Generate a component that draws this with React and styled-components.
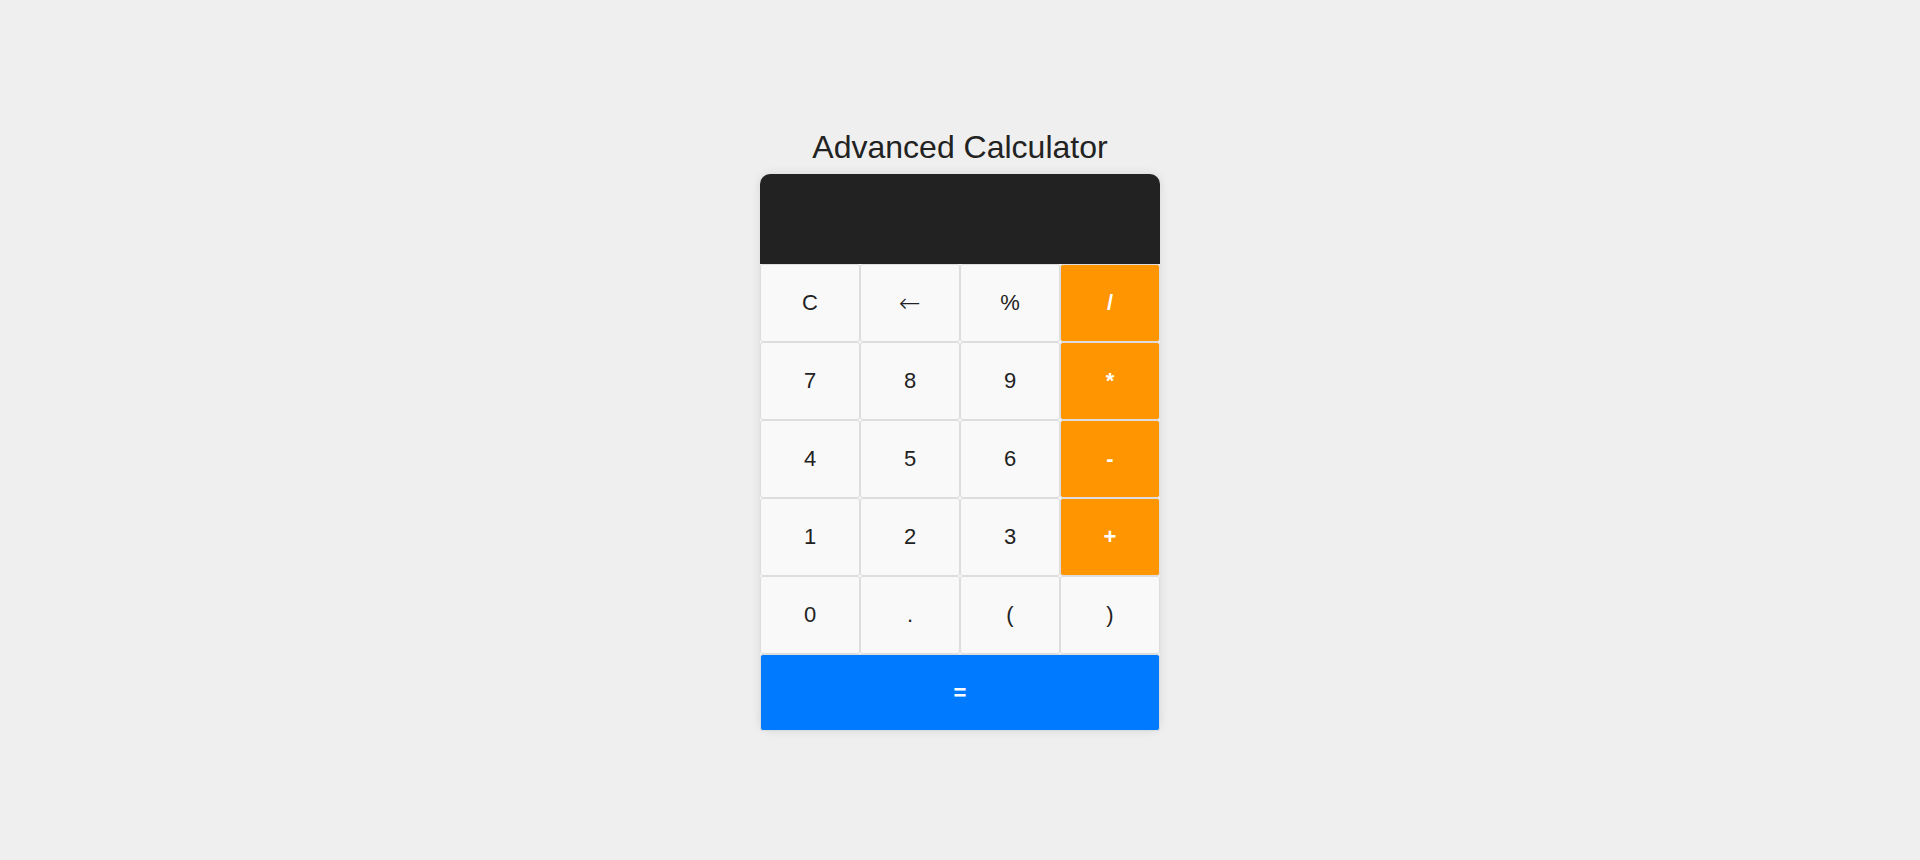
import styled, { createGlobalStyle } from "styled-components";

const GlobalStyle = createGlobalStyle`
  body {
    margin: 0;
    background: #efefef;
    font-family: "Liberation Sans", Arial, sans-serif;
  }
`;

const rows = [
  ["C", "←", "%", "/"],
  ["7", "8", "9", "*"],
  ["4", "5", "6", "-"],
  ["1", "2", "3", "+"],
  ["0", ".", "(", ")"],
];

const operators = ["/", "*", "-", "+"];

const App = () => {
  return (
    <>
      <GlobalStyle />
      <Page>
        <Title>Advanced Calculator</Title>
        <Calculator>
          <Display />
          <Keys>
            {rows.flat().map((key) => (
              <Key key={key} $operator={operators.includes(key)}>
                {key === "←" ? <Arrow>{key}</Arrow> : key}
              </Key>
            ))}
          </Keys>
          <EqualsKey>=</EqualsKey>
        </Calculator>
      </Page>
    </>
  );
};

const Page = styled.div`
  height: 100vh;
  display: flex;
  flex-direction: column;
  align-items: center;
  justify-content: center;
`;

const Title = styled.h1`
  margin: 0 0 8px;
  font-size: 32px;
  font-weight: normal;
  color: #222;
`;

const Calculator = styled.div`
  width: 400px;
  border-radius: 10px;
  background: #f4f4f4;
  box-shadow: 0 0 10px rgba(0, 0, 0, 0.1);
`;

const Display = styled.div`
  height: 90px;
  background: #222;
  color: #fff;
  border-radius: 10px 10px 0 0;
`;

const Keys = styled.div`
  display: grid;
  grid-template-columns: repeat(4, 100px);
  grid-auto-rows: 78px;
`;

const Key = styled.button`
  box-sizing: border-box;
  border: 1px solid #ddd;
  border-radius: 3px;
  background: ${(props) => (props.$operator ? "#ff9500" : "#f9f9f9")};
  color: ${(props) => (props.$operator ? "#fff" : "#222")};
  font-family: "Liberation Sans", Arial, sans-serif;
  font-size: 22px;
  font-weight: ${(props) => (props.$operator ? "bold" : "normal")};
  cursor: pointer;
  padding: 0;
`;

const Arrow = styled.span`
  font-family: "DejaVu Sans", sans-serif;
  font-size: 26px;
  font-weight: 200;
`;

const EqualsKey = styled.button`
  display: block;
  box-sizing: border-box;
  width: 100%;
  height: 77px;
  border: 1px solid #ddd;
  border-radius: 3px;
  background: #007bff;
  color: #fff;
  font-family: "Liberation Sans", Arial, sans-serif;
  font-size: 22px;
  font-weight: bold;
  cursor: pointer;
`;

export default App;
